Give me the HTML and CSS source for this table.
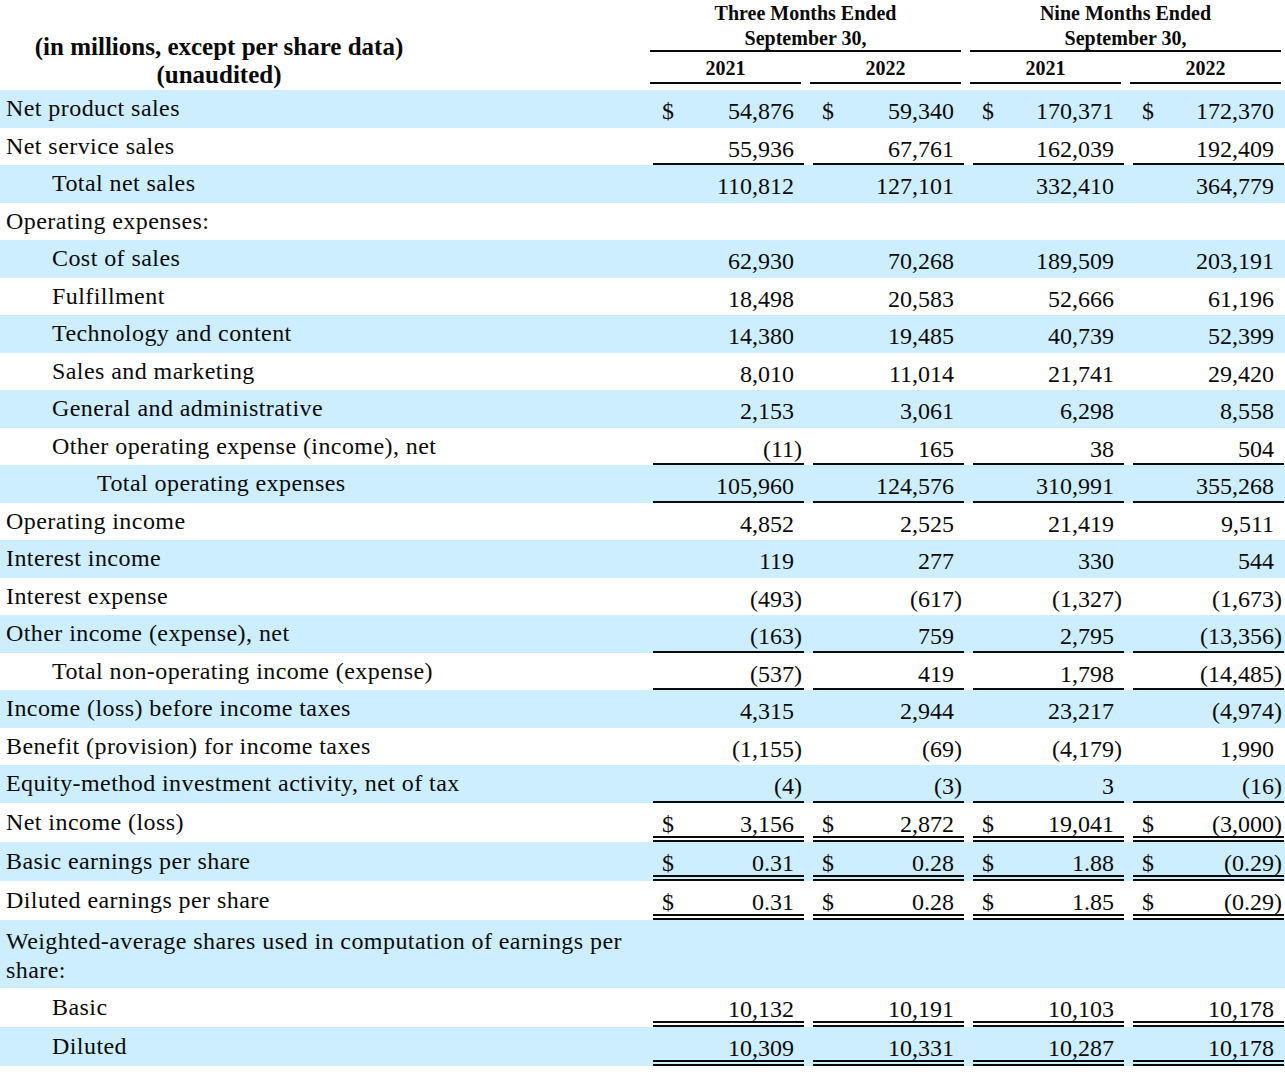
FILE: index.html
```html
<!DOCTYPE html>
<html lang="en">
<head>
<meta charset="utf-8">
<title>Consolidated Statements of Operations</title>
<link rel="stylesheet" href="styles.css">
</head>
<body>
<div class="stmt">
  <div class="head">
    <div class="head-label">(in millions, except per share data)<br>(unaudited)</div>
    <div class="head-periods">
      <div class="period">
        <div class="period-title">Three Months Ended<br>September 30,</div>
        <div class="years"><div class="year">2021</div><div class="year">2022</div></div>
      </div>
      <div class="period">
        <div class="period-title">Nine Months Ended<br>September 30,</div>
        <div class="years"><div class="year">2021</div><div class="year">2022</div></div>
      </div>
    </div>
  </div>

  <div class="row shade">
    <div class="label">Net product sales</div>
    <div class="grp"><div class="cell"><span class="cur">$</span><span class="num">54,876</span><span class="rp"></span></div></div>
    <div class="grp"><div class="cell"><span class="cur">$</span><span class="num">59,340</span><span class="rp"></span></div></div>
    <div class="grp"><div class="cell"><span class="cur">$</span><span class="num">170,371</span><span class="rp"></span></div></div>
    <div class="grp"><div class="cell"><span class="cur">$</span><span class="num">172,370</span><span class="rp"></span></div></div>
  </div>
  <div class="row">
    <div class="label">Net service sales</div>
    <div class="grp"><div class="cell u"><span class="num">55,936</span><span class="rp"></span></div></div>
    <div class="grp"><div class="cell u"><span class="num">67,761</span><span class="rp"></span></div></div>
    <div class="grp"><div class="cell u"><span class="num">162,039</span><span class="rp"></span></div></div>
    <div class="grp"><div class="cell u"><span class="num">192,409</span><span class="rp"></span></div></div>
  </div>
  <div class="row shade">
    <div class="label i1">Total net sales</div>
    <div class="grp"><div class="cell"><span class="num">110,812</span><span class="rp"></span></div></div>
    <div class="grp"><div class="cell"><span class="num">127,101</span><span class="rp"></span></div></div>
    <div class="grp"><div class="cell"><span class="num">332,410</span><span class="rp"></span></div></div>
    <div class="grp"><div class="cell"><span class="num">364,779</span><span class="rp"></span></div></div>
  </div>
  <div class="row">
    <div class="label">Operating expenses:</div>
  </div>
  <div class="row shade">
    <div class="label i1">Cost of sales</div>
    <div class="grp"><div class="cell"><span class="num">62,930</span><span class="rp"></span></div></div>
    <div class="grp"><div class="cell"><span class="num">70,268</span><span class="rp"></span></div></div>
    <div class="grp"><div class="cell"><span class="num">189,509</span><span class="rp"></span></div></div>
    <div class="grp"><div class="cell"><span class="num">203,191</span><span class="rp"></span></div></div>
  </div>
  <div class="row">
    <div class="label i1">Fulfillment</div>
    <div class="grp"><div class="cell"><span class="num">18,498</span><span class="rp"></span></div></div>
    <div class="grp"><div class="cell"><span class="num">20,583</span><span class="rp"></span></div></div>
    <div class="grp"><div class="cell"><span class="num">52,666</span><span class="rp"></span></div></div>
    <div class="grp"><div class="cell"><span class="num">61,196</span><span class="rp"></span></div></div>
  </div>
  <div class="row shade">
    <div class="label i1">Technology and content</div>
    <div class="grp"><div class="cell"><span class="num">14,380</span><span class="rp"></span></div></div>
    <div class="grp"><div class="cell"><span class="num">19,485</span><span class="rp"></span></div></div>
    <div class="grp"><div class="cell"><span class="num">40,739</span><span class="rp"></span></div></div>
    <div class="grp"><div class="cell"><span class="num">52,399</span><span class="rp"></span></div></div>
  </div>
  <div class="row">
    <div class="label i1">Sales and marketing</div>
    <div class="grp"><div class="cell"><span class="num">8,010</span><span class="rp"></span></div></div>
    <div class="grp"><div class="cell"><span class="num">11,014</span><span class="rp"></span></div></div>
    <div class="grp"><div class="cell"><span class="num">21,741</span><span class="rp"></span></div></div>
    <div class="grp"><div class="cell"><span class="num">29,420</span><span class="rp"></span></div></div>
  </div>
  <div class="row shade">
    <div class="label i1">General and administrative</div>
    <div class="grp"><div class="cell"><span class="num">2,153</span><span class="rp"></span></div></div>
    <div class="grp"><div class="cell"><span class="num">3,061</span><span class="rp"></span></div></div>
    <div class="grp"><div class="cell"><span class="num">6,298</span><span class="rp"></span></div></div>
    <div class="grp"><div class="cell"><span class="num">8,558</span><span class="rp"></span></div></div>
  </div>
  <div class="row">
    <div class="label i1">Other operating expense (income), net</div>
    <div class="grp"><div class="cell u"><span class="num">(11</span><span class="rp">)</span></div></div>
    <div class="grp"><div class="cell u"><span class="num">165</span><span class="rp"></span></div></div>
    <div class="grp"><div class="cell u"><span class="num">38</span><span class="rp"></span></div></div>
    <div class="grp"><div class="cell u"><span class="num">504</span><span class="rp"></span></div></div>
  </div>
  <div class="row shade">
    <div class="label i2">Total operating expenses</div>
    <div class="grp"><div class="cell u"><span class="num">105,960</span><span class="rp"></span></div></div>
    <div class="grp"><div class="cell u"><span class="num">124,576</span><span class="rp"></span></div></div>
    <div class="grp"><div class="cell u"><span class="num">310,991</span><span class="rp"></span></div></div>
    <div class="grp"><div class="cell u"><span class="num">355,268</span><span class="rp"></span></div></div>
  </div>
  <div class="row">
    <div class="label">Operating income</div>
    <div class="grp"><div class="cell"><span class="num">4,852</span><span class="rp"></span></div></div>
    <div class="grp"><div class="cell"><span class="num">2,525</span><span class="rp"></span></div></div>
    <div class="grp"><div class="cell"><span class="num">21,419</span><span class="rp"></span></div></div>
    <div class="grp"><div class="cell"><span class="num">9,511</span><span class="rp"></span></div></div>
  </div>
  <div class="row shade">
    <div class="label">Interest income</div>
    <div class="grp"><div class="cell"><span class="num">119</span><span class="rp"></span></div></div>
    <div class="grp"><div class="cell"><span class="num">277</span><span class="rp"></span></div></div>
    <div class="grp"><div class="cell"><span class="num">330</span><span class="rp"></span></div></div>
    <div class="grp"><div class="cell"><span class="num">544</span><span class="rp"></span></div></div>
  </div>
  <div class="row">
    <div class="label">Interest expense</div>
    <div class="grp"><div class="cell"><span class="num">(493</span><span class="rp">)</span></div></div>
    <div class="grp"><div class="cell"><span class="num">(617</span><span class="rp">)</span></div></div>
    <div class="grp"><div class="cell"><span class="num">(1,327</span><span class="rp">)</span></div></div>
    <div class="grp"><div class="cell"><span class="num">(1,673</span><span class="rp">)</span></div></div>
  </div>
  <div class="row shade">
    <div class="label">Other income (expense), net</div>
    <div class="grp"><div class="cell u"><span class="num">(163</span><span class="rp">)</span></div></div>
    <div class="grp"><div class="cell u"><span class="num">759</span><span class="rp"></span></div></div>
    <div class="grp"><div class="cell u"><span class="num">2,795</span><span class="rp"></span></div></div>
    <div class="grp"><div class="cell u"><span class="num">(13,356</span><span class="rp">)</span></div></div>
  </div>
  <div class="row">
    <div class="label i1">Total non-operating income (expense)</div>
    <div class="grp"><div class="cell u"><span class="num">(537</span><span class="rp">)</span></div></div>
    <div class="grp"><div class="cell u"><span class="num">419</span><span class="rp"></span></div></div>
    <div class="grp"><div class="cell u"><span class="num">1,798</span><span class="rp"></span></div></div>
    <div class="grp"><div class="cell u"><span class="num">(14,485</span><span class="rp">)</span></div></div>
  </div>
  <div class="row shade">
    <div class="label">Income (loss) before income taxes</div>
    <div class="grp"><div class="cell"><span class="num">4,315</span><span class="rp"></span></div></div>
    <div class="grp"><div class="cell"><span class="num">2,944</span><span class="rp"></span></div></div>
    <div class="grp"><div class="cell"><span class="num">23,217</span><span class="rp"></span></div></div>
    <div class="grp"><div class="cell"><span class="num">(4,974</span><span class="rp">)</span></div></div>
  </div>
  <div class="row">
    <div class="label">Benefit (provision) for income taxes</div>
    <div class="grp"><div class="cell"><span class="num">(1,155</span><span class="rp">)</span></div></div>
    <div class="grp"><div class="cell"><span class="num">(69</span><span class="rp">)</span></div></div>
    <div class="grp"><div class="cell"><span class="num">(4,179</span><span class="rp">)</span></div></div>
    <div class="grp"><div class="cell"><span class="num">1,990</span><span class="rp"></span></div></div>
  </div>
  <div class="row shade">
    <div class="label">Equity-method investment activity, net of tax</div>
    <div class="grp"><div class="cell u"><span class="num">(4</span><span class="rp">)</span></div></div>
    <div class="grp"><div class="cell u"><span class="num">(3</span><span class="rp">)</span></div></div>
    <div class="grp"><div class="cell u"><span class="num">3</span><span class="rp"></span></div></div>
    <div class="grp"><div class="cell u"><span class="num">(16</span><span class="rp">)</span></div></div>
  </div>
  <div class="row dbl">
    <div class="label">Net income (loss)</div>
    <div class="grp"><div class="cell uu"><span class="cur">$</span><span class="num">3,156</span><span class="rp"></span></div></div>
    <div class="grp"><div class="cell uu"><span class="cur">$</span><span class="num">2,872</span><span class="rp"></span></div></div>
    <div class="grp"><div class="cell uu"><span class="cur">$</span><span class="num">19,041</span><span class="rp"></span></div></div>
    <div class="grp"><div class="cell uu"><span class="cur">$</span><span class="num">(3,000</span><span class="rp">)</span></div></div>
  </div>
  <div class="row dbl shade">
    <div class="label">Basic earnings per share</div>
    <div class="grp"><div class="cell uu"><span class="cur">$</span><span class="num">0.31</span><span class="rp"></span></div></div>
    <div class="grp"><div class="cell uu"><span class="cur">$</span><span class="num">0.28</span><span class="rp"></span></div></div>
    <div class="grp"><div class="cell uu"><span class="cur">$</span><span class="num">1.88</span><span class="rp"></span></div></div>
    <div class="grp"><div class="cell uu"><span class="cur">$</span><span class="num">(0.29</span><span class="rp">)</span></div></div>
  </div>
  <div class="row dbl">
    <div class="label">Diluted earnings per share</div>
    <div class="grp"><div class="cell uu"><span class="cur">$</span><span class="num">0.31</span><span class="rp"></span></div></div>
    <div class="grp"><div class="cell uu"><span class="cur">$</span><span class="num">0.28</span><span class="rp"></span></div></div>
    <div class="grp"><div class="cell uu"><span class="cur">$</span><span class="num">1.85</span><span class="rp"></span></div></div>
    <div class="grp"><div class="cell uu"><span class="cur">$</span><span class="num">(0.29</span><span class="rp">)</span></div></div>
  </div>
  <div class="row tall shade">
    <div class="label wrap">Weighted-average shares used in computation of earnings per share:</div>
  </div>
  <div class="row dbl">
    <div class="label i1">Basic</div>
    <div class="grp"><div class="cell uu"><span class="num">10,132</span><span class="rp"></span></div></div>
    <div class="grp"><div class="cell uu"><span class="num">10,191</span><span class="rp"></span></div></div>
    <div class="grp"><div class="cell uu"><span class="num">10,103</span><span class="rp"></span></div></div>
    <div class="grp"><div class="cell uu"><span class="num">10,178</span><span class="rp"></span></div></div>
  </div>
  <div class="row dbl shade">
    <div class="label i1">Diluted</div>
    <div class="grp"><div class="cell uu"><span class="num">10,309</span><span class="rp"></span></div></div>
    <div class="grp"><div class="cell uu"><span class="num">10,331</span><span class="rp"></span></div></div>
    <div class="grp"><div class="cell uu"><span class="num">10,287</span><span class="rp"></span></div></div>
    <div class="grp"><div class="cell uu"><span class="num">10,178</span><span class="rp"></span></div></div>
  </div>
</div>
</body>
</html>
```

FILE: styles.css
```css
* {
  box-sizing: border-box;
  margin: 0;
  padding: 0;
}

html, body {
  background: #ffffff;
}

body {
  width: 1285px;
  height: 1076px;
  overflow: hidden;
  font-family: "Liberation Serif", "Times New Roman", serif;
  color: #0a0a0a;
}

.stmt {
  width: 1285px;
}

/* ---------- header ---------- */
.head {
  display: flex;
  height: 90px;
}

.head-label {
  flex: none;
  width: 438px;
  padding-top: 33px;
  font-weight: bold;
  font-size: 25px;
  line-height: 28px;
  text-align: center;
}

.head-periods {
  flex: none;
  display: flex;
  gap: 9px;
  margin-left: 212px;
}

.period {
  width: 311px;
}

.period-title {
  height: 52px;
  padding-top: 1px;
  font-weight: bold;
  font-size: 20px;
  line-height: 25px;
  text-align: center;
  border-bottom: 2px solid #0a0a0a;
}

.years {
  display: flex;
  gap: 9px;
}

.year {
  width: 151px;
  height: 32px;
  padding-top: 3px;
  font-weight: bold;
  font-size: 20px;
  line-height: 27px;
  text-align: center;
  border-bottom: 2px solid #0a0a0a;
}

/* ---------- body rows ---------- */
.row {
  display: flex;
  height: 37.5px;
  font-size: 24px;
}

.row.shade {
  background: #cceeff;
}

.row.dbl {
  height: 39px;
}

.row.tall {
  height: 68px;
}

.label {
  flex: none;
  width: 653px;
  padding-left: 6px;
  line-height: 37.5px;
  letter-spacing: 0.43px;
  white-space: nowrap;
}

.dbl .label {
  line-height: 39px;
}

.label.i1 {
  padding-left: 52px;
}

.label.i2 {
  padding-left: 97px;
}

.label.wrap {
  white-space: normal;
  padding-top: 7px;
  padding-right: 20px;
  line-height: 29px;
}

.grp {
  flex: none;
  width: 160px;
  height: 100%;
}

.cell {
  display: flex;
  width: 151px;
  height: 100%;
  padding-top: 8px;
  padding-left: 9px;
  line-height: 27px;
}

.cell.u {
  border-bottom: 2px solid #0a0a0a;
}

.cell.uu {
  border-bottom: 6px double #0a0a0a;
}

.cur {
  flex: none;
}

.num {
  flex: 1;
  text-align: right;
}

.rp {
  flex: none;
  width: 10px;
}
```
